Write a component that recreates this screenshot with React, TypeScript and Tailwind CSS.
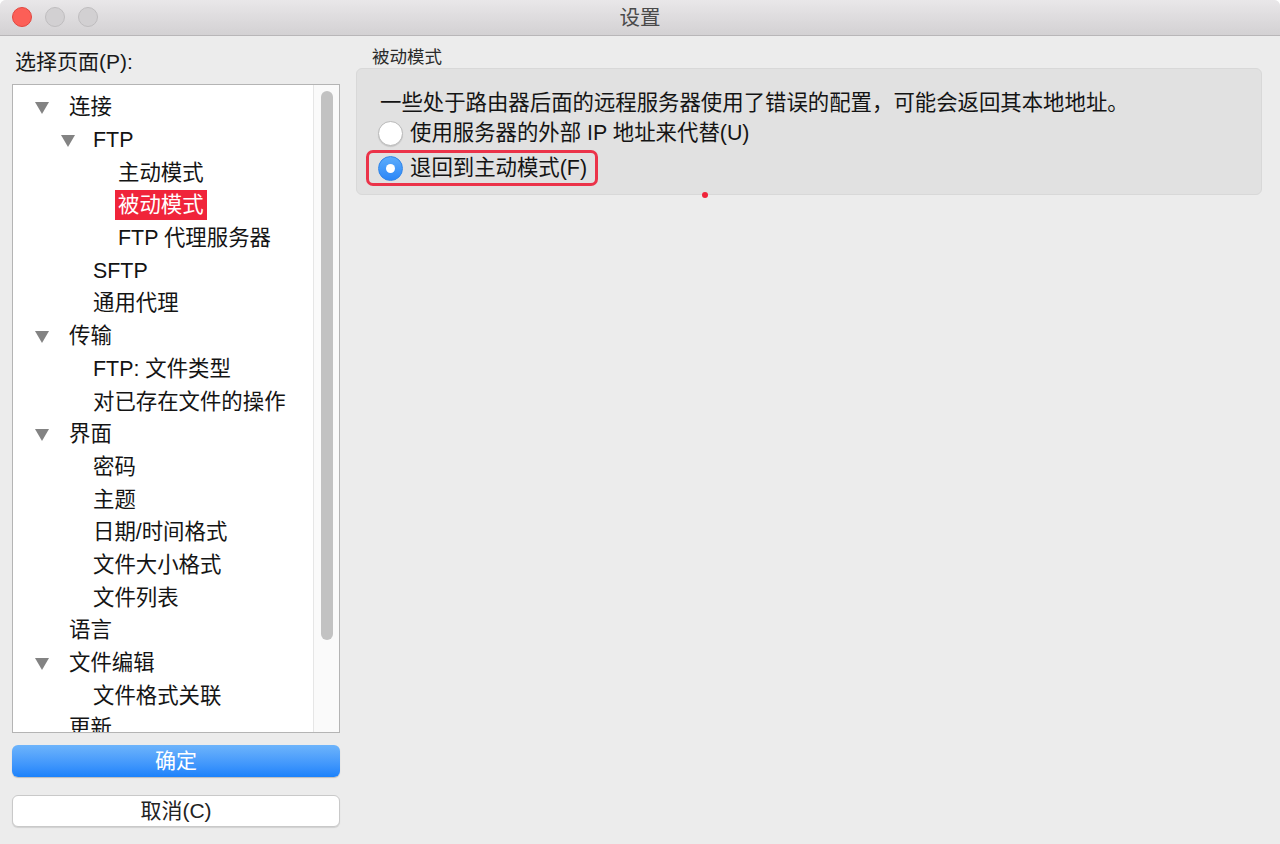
import React from 'react'

const font = "font-['Liberation_Sans','Noto_Sans_CJK_SC',sans-serif]"

type Node = { label: string; level: number; open?: boolean; selected?: boolean }

const tree: Node[] = [
  { label: '连接', level: 0, open: true },
  { label: 'FTP', level: 1, open: true },
  { label: '主动模式', level: 2 },
  { label: '被动模式', level: 2, selected: true },
  { label: 'FTP 代理服务器', level: 2 },
  { label: 'SFTP', level: 1 },
  { label: '通用代理', level: 1 },
  { label: '传输', level: 0, open: true },
  { label: 'FTP: 文件类型', level: 1 },
  { label: '对已存在文件的操作', level: 1 },
  { label: '界面', level: 0, open: true },
  { label: '密码', level: 1 },
  { label: '主题', level: 1 },
  { label: '日期/时间格式', level: 1 },
  { label: '文件大小格式', level: 1 },
  { label: '文件列表', level: 1 },
  { label: '语言', level: 0 },
  { label: '文件编辑', level: 0, open: true },
  { label: '文件格式关联', level: 1 },
  { label: '更新', level: 0 },
]

const indent = ['pl-[56px]', 'pl-[80px]', 'pl-[105px]']
const arrowPos = ['left-[22px]', 'left-[48px]', 'left-[73px]']

function Triangle() {
  return (
    <svg width="14" height="12" viewBox="0 0 14 12">
      <path d="M0 0 H14 L7 12 Z" fill="#838383" />
    </svg>
  )
}

function TreeRow({ node }: { node: Node }) {
  return (
    <div className={`relative h-[32.7px] flex items-center ${indent[node.level]}`}>
      {node.open && (
        <span className={`absolute top-[11px] ${arrowPos[node.level]}`}>
          <Triangle />
        </span>
      )}
      <span
        className={`text-[21.4px] leading-[30px] px-[3px] -ml-[3px] whitespace-nowrap ${
          node.selected ? 'bg-[#f0243a] text-white' : 'text-[#141414]'
        }`}
      >
        {node.label}
      </span>
    </div>
  )
}

function Radio({ checked }: { checked?: boolean }) {
  if (checked) {
    return (
      <span className="w-[25px] h-[25px] rounded-full bg-gradient-to-b from-[#5cacfb] to-[#2a86f7] border border-[#2f84e8] flex items-center justify-center shrink-0">
        <span className="w-[9px] h-[9px] rounded-full bg-white" />
      </span>
    )
  }
  return (
    <span className="w-[25px] h-[25px] rounded-full bg-white border border-[#b9b9b9] shadow-[0_1px_1px_rgba(0,0,0,0.12)] shrink-0" />
  )
}

export default function App() {
  return (
    <div className={`w-[1280px] h-[844px] bg-white ${font}`}>
      <div className="w-full h-full bg-[#ececec] rounded-t-[6px] flex flex-col overflow-hidden">
        <div className="h-[36px] shrink-0 bg-gradient-to-b from-[#e9e7e9] to-[#d3d1d3] border-b border-[#b8b6b8] relative flex items-center justify-center">
          <div className="absolute left-[12px] top-[7px] flex gap-[13px]">
            <span className="w-[20px] h-[20px] rounded-full bg-[#fc5f57] border border-[#e2463f]" />
            <span className="w-[20px] h-[20px] rounded-full bg-[#d2d0d2] border border-[#bfbdbf]" />
            <span className="w-[20px] h-[20px] rounded-full bg-[#d2d0d2] border border-[#bfbdbf]" />
          </div>
          <span className="text-[20.5px] leading-[26px] text-[#4a4a4a]">设置</span>
        </div>

        <div className="flex-1 flex pl-[12px] pr-[18px]">
          <div className="w-[328px] flex flex-col">
            <div className="pt-[13px] h-[48px] text-[21px] leading-[26px] text-[#1a1a1a] pl-[3px]">选择页面(P):</div>
            <div className="h-[649px] bg-white border border-[#b4b4b4] flex overflow-hidden">
              <div className="flex-1 pt-[6px] overflow-hidden">
                {tree.map((n) => (
                  <TreeRow key={n.label} node={n} />
                ))}
              </div>
              <div className="w-[26px] bg-[#fafafa] border-l border-[#e6e6e6] pt-[6px] flex justify-center">
                <div className="w-[12px] h-[549px] rounded-full bg-[#c2c2c2]" />
              </div>
            </div>
            <button className="mt-[12px] h-[32px] rounded-[6px] bg-gradient-to-b from-[#6db4fb] to-[#1b82fb] text-white text-[21px] leading-[26px] shadow-[0_1px_1px_rgba(0,0,0,0.2)]">
              确定
            </button>
            <button className="mt-[18px] h-[32px] rounded-[6px] bg-white border border-[#c9c9c9] text-[#222] text-[21px] leading-[26px] shadow-[0_1px_1px_rgba(0,0,0,0.12)]">
              取消(C)
            </button>
          </div>

          <div className="flex-1 ml-[16px] flex flex-col">
            <div className="pt-[11px] h-[32px] pl-[16px] text-[17.5px] leading-[20px] text-[#2a2a2a]">被动模式</div>
            <div className="relative h-[127px] bg-[#e1e1e1] border border-[#d8d8d8] rounded-[6px] pt-[19px]">
              <div className="pl-[23px] h-[30px] flex items-center text-[21.4px] text-[#141414] whitespace-nowrap">
                一些处于路由器后面的远程服务器使用了错误的配置，可能会返回其本地地址。
              </div>
              <div className="pl-[21px] h-[30px] flex items-center gap-[7px] text-[21.4px] text-[#141414] whitespace-nowrap">
                <Radio />
                <span>使用服务器的外部 IP 地址来代替(U)</span>
              </div>
              <div className="ml-[9px] mt-[2px] w-[232px] h-[36px] border-[3px] border-[#eb3349] rounded-[7px] pl-[9px] flex items-center gap-[7px] text-[21.4px] text-[#141414] whitespace-nowrap">
                <Radio checked />
                <span>退回到主动模式(F)</span>
              </div>
              <span className="absolute left-[345px] top-[123px] w-[6px] h-[6px] rounded-full bg-[#f0243a]" />
            </div>
          </div>
        </div>
      </div>
    </div>
  )
}
